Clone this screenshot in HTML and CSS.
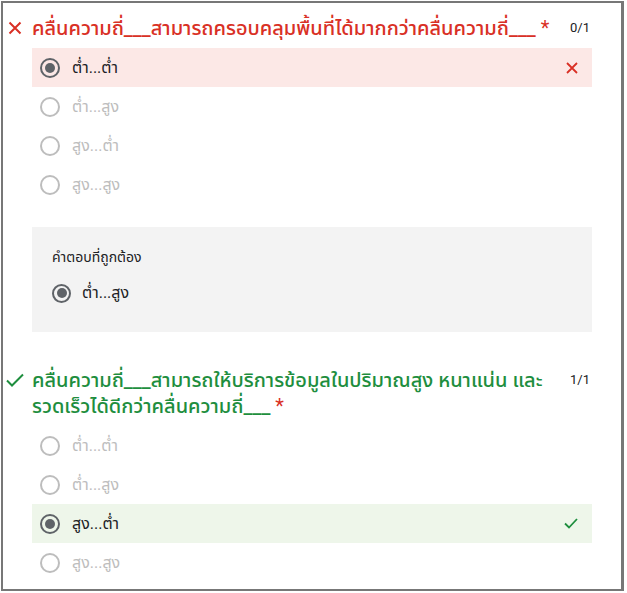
FILE: index.html
```html
<!DOCTYPE html>
<html lang="th">
<head>
<meta charset="utf-8">
<link rel="stylesheet" href="styles.css">
</head>
<body>
<div class="frame">
  <section class="question q1">
    <div class="head">
      <svg class="mark" width="14" height="14" viewBox="0 0 14 14"><path d="M1.5 1.5 L12.5 12.5 M12.5 1.5 L1.5 12.5" stroke="#d93025" stroke-width="2" fill="none"/></svg>
      <h2 class="title wrong">คลื่นความถี่___สามารถครอบคลุมพื้นที่ได้มากกว่าคลื่นความถี่___ <span class="req">*</span></h2>
      <span class="score">0/1</span>
    </div>
    <div class="opt picked bad"><span class="radio on"></span><span class="lbl">ต่ำ...ต่ำ</span>
      <svg class="rmark" width="12" height="12" viewBox="0 0 12 12"><path d="M1 1 L11 11 M11 1 L1 11" stroke="#d93025" stroke-width="1.8" fill="none"/></svg></div>
    <div class="opt"><span class="radio"></span><span class="lbl">ต่ำ...สูง</span></div>
    <div class="opt"><span class="radio"></span><span class="lbl">สูง...ต่ำ</span></div>
    <div class="opt"><span class="radio"></span><span class="lbl">สูง...สูง</span></div>
    <div class="correct">
      <div class="clabel">คำตอบที่ถูกต้อง</div>
      <div class="copt"><span class="radio on"></span><span class="lbl">ต่ำ...สูง</span></div>
    </div>
  </section>
  <section class="question q2">
    <div class="head">
      <svg class="mark" width="18" height="14" viewBox="0 0 18 14"><path d="M1 7.5 L6 12.5 L17 1.5" stroke="#1e8e3e" stroke-width="2" fill="none"/></svg>
      <h2 class="title right">คลื่นความถี่___สามารถให้บริการข้อมูลในปริมาณสูง หนาแน่น และ<br>รวดเร็วได้ดีกว่าคลื่นความถี่___ <span class="req">*</span></h2>
      <span class="score">1/1</span>
    </div>
    <div class="opt"><span class="radio"></span><span class="lbl">ต่ำ...ต่ำ</span></div>
    <div class="opt"><span class="radio"></span><span class="lbl">ต่ำ...สูง</span></div>
    <div class="opt picked good"><span class="radio on"></span><span class="lbl">สูง...ต่ำ</span>
      <svg class="rmark" width="14" height="11" viewBox="0 0 14 11"><path d="M1 5.5 L5 9.5 L13 1" stroke="#1e8e3e" stroke-width="1.8" fill="none"/></svg></div>
    <div class="opt"><span class="radio"></span><span class="lbl">สูง...สูง</span></div>
  </section>
</div>
</body>
</html>
```
FILE: styles.css
```css
* { box-sizing: border-box; }
html, body { margin: 0; padding: 0; background: #fff; }
body {
  font-family: Roboto, "Noto Sans Thai", "Noto Sans", sans-serif;
  color: #202124;
}
.frame {
  margin: 1px 0 0 1px;
  width: 623px;
  height: 590px;
  border: 2px solid #777;
  border-right-width: 3px;
  overflow: hidden;
}
.question {
  padding: 0 29px 0 29px;
}
.q1 { padding-top: 12px; }
.q2 { padding-top: 35px; }
.head {
  position: relative;
  display: flex;
  align-items: flex-start;
  margin-bottom: 7px;
}
.mark {
  position: absolute;
  left: -24px;
  top: 6px;
}
.q2 .mark { left: -26px; top: 6px; }
.title {
  flex: 1;
  margin: 0;
  font-size: 20px;
  font-weight: 500;
  line-height: 26px;
  padding-right: 20px;
  white-space: nowrap;
}
.title.wrong { color: #d93025; }
.title.right { color: #1e8e3e; }
.req { color: #d93025; font-weight: 400; }
.score {
  font-size: 13px;
  line-height: 26px;
  padding-right: 2px;
  color: #202124;
}
.opt {
  height: 39px;
  display: flex;
  align-items: center;
  padding-left: 8px;
  padding-right: 14px;
  font-size: 16px;
  color: #bdbdbd;
}
.opt.picked { color: #202124; }
.opt.bad { background: #fce8e6; }
.opt.good { background: #eef6ea; }
.radio {
  width: 20px;
  height: 20px;
  border: 2px solid #bdbdbd;
  border-radius: 50%;
  flex: none;
  display: flex;
  align-items: center;
  justify-content: center;
}
.radio.on { border-color: #5f6368; }
.radio.on::after {
  content: "";
  width: 10px;
  height: 10px;
  border-radius: 50%;
  background: #5f6368;
}
.lbl { margin-left: 12px; flex: 1; }
.rmark { flex: none; }
.correct {
  margin-top: 23px;
  background: #f3f3f3;
  height: 105px;
  padding: 20px 20px 0 20px;
}
.clabel {
  font-size: 14px;
  line-height: 20px;
  color: #202124;
}
.copt {
  display: flex;
  align-items: center;
  margin-top: 14px;
  font-size: 16px;
  color: #202124;
}
.copt .radio { width: 19px; height: 19px; }
.copt .lbl { margin-left: 11px; }
```
